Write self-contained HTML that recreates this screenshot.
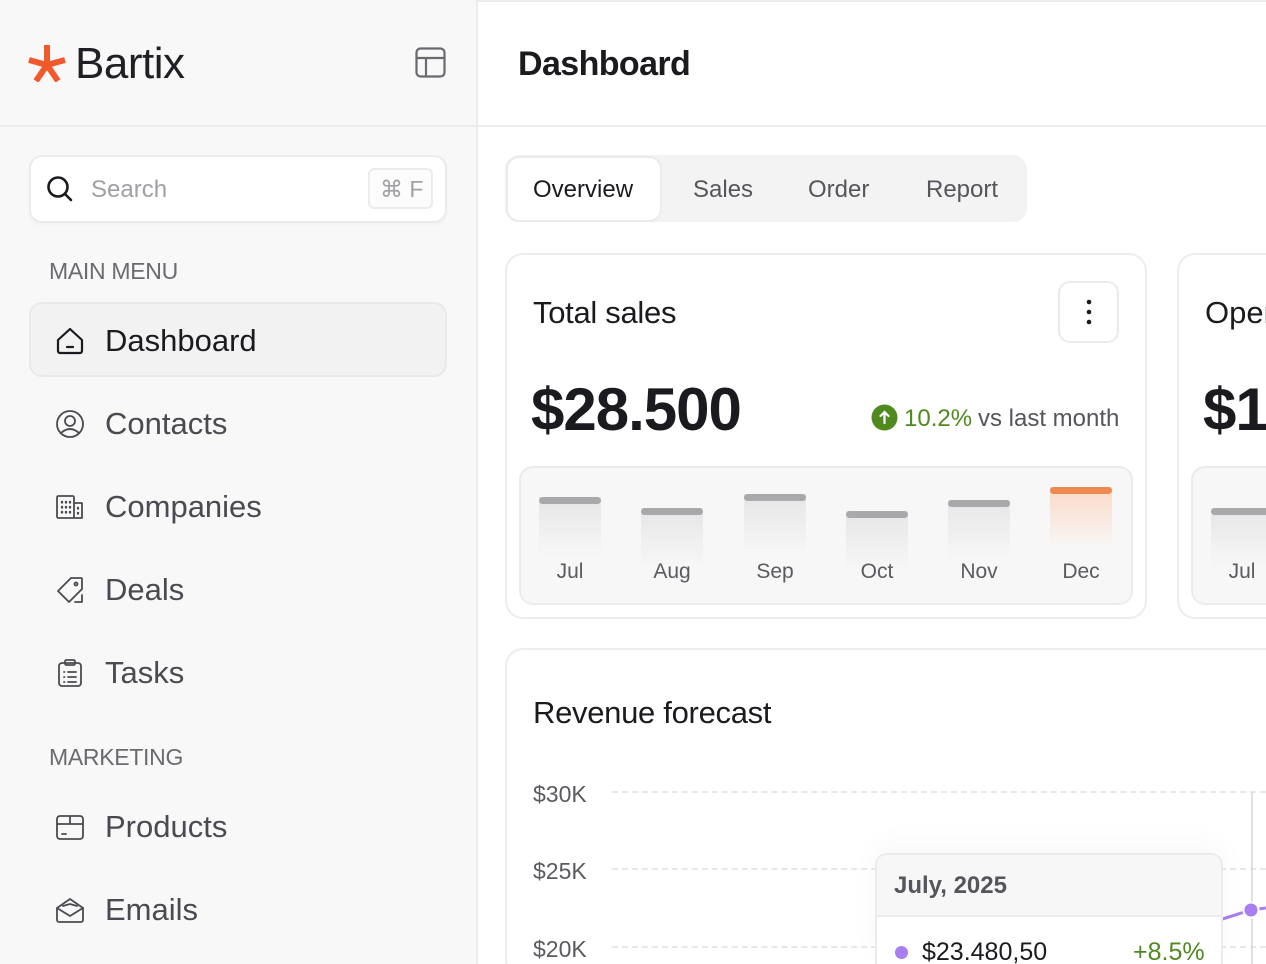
<!DOCTYPE html>
<html style="overflow:hidden;width:1266px;height:964px"><head><meta charset="utf-8"><style>
*{margin:0;padding:0;box-sizing:border-box}
body{width:1266px;height:964px;overflow:hidden;position:relative;background:#fff;font-family:"Liberation Sans",Arial,sans-serif;color:#1b1b1f}
.a{position:absolute;white-space:nowrap}
#side{position:absolute;left:0;top:0;width:478px;height:964px;background:#f8f8f8;border-right:2px solid #ececec}
.hl{position:absolute;left:0;width:1266px;top:125px;height:2px;background:#ececec}
.nav{position:absolute;left:55px;font-size:31px;color:#4a4a50;display:flex;align-items:center;gap:20px;height:40px}
.nav svg{width:30px;height:30px;stroke:#4a4a50;fill:none;stroke-width:1.8;stroke-linecap:round;stroke-linejoin:round}
.sec{position:absolute;left:49px;font-size:23px;color:#6a6a70;letter-spacing:-0.3px}
.card{position:absolute;background:#fff;border:2px solid #ededed;border-radius:18px}
.panel{position:absolute;background:#f7f7f7;border:2px solid #ebebeb;border-radius:14px}
.bar{position:absolute;width:62px;height:60px;background:linear-gradient(#e6e6e8,rgba(240,240,242,0))}
.bar:before{content:"";position:absolute;left:0;top:0;width:62px;height:7px;border-radius:4px;background:#a9a9ac}
.bar.o{background:linear-gradient(#fbd9c6,rgba(252,235,225,0))}
.bar.o:before{background:#ec8a4f}
.ml{position:absolute;font-size:21px;color:#5a5a60;width:62px;text-align:center;top:560px}
.yl{position:absolute;left:533px;font-size:23px;color:#5a5a60}
.dash{position:absolute;left:612px;width:654px;border-top:2px dashed #e8e8e8}
</style></head><body>
<div id="side"></div>
<div class="hl"></div>
<div class="a" style="left:478px;top:0;width:788px;height:2px;background:#ececec"></div>

<svg class="a" style="left:27px;top:44px" width="40" height="38" viewBox="0 0 40 38"><g stroke="#f0592b" stroke-width="6" stroke-linecap="butt"><line x1="20" y1="1" x2="20" y2="21"/><line x1="2" y1="16" x2="20" y2="21"/><line x1="38" y1="16" x2="20" y2="21"/><line x1="9" y1="37" x2="20" y2="21"/><line x1="31" y1="37" x2="20" y2="21"/></g></svg>
<div class="a" style="left:75px;top:39px;font-size:44px;color:#1f1f24;letter-spacing:-0.5px">Bartix</div>
<svg class="a" style="left:415px;top:47px" width="31" height="31" viewBox="0 0 31 31" fill="none" stroke="#6a6a70" stroke-width="2.2"><rect x="1.5" y="1.5" width="28" height="28" rx="4"/><line x1="1.5" y1="11" x2="29.5" y2="11"/><line x1="11" y1="11" x2="11" y2="29.5"/></svg>

<div class="a" style="left:29px;top:155px;width:418px;height:68px;background:#fff;border:2px solid #ebebeb;border-radius:13px;box-shadow:0 2px 3px rgba(0,0,0,.03)"></div>
<svg class="a" style="left:46px;top:175px" width="28" height="28" viewBox="0 0 28 28" fill="none" stroke="#1b1b1f" stroke-width="2.6" stroke-linecap="round"><circle cx="12" cy="12" r="9.5"/><line x1="19" y1="19" x2="25" y2="25"/></svg>
<div class="a" style="left:91px;top:176px;font-size:24px;color:#a0a0a4">Search</div>
<div class="a" style="left:368px;top:168px;width:65px;height:41px;border:2px solid #ececec;border-radius:6px;background:#fcfcfc;font-size:23px;color:#a0a0a4;padding:6px 0 0 10px">⌘ F</div>

<div class="sec" style="top:258px">MAIN MENU</div>
<div class="a" style="left:29px;top:302px;width:418px;height:75px;background:#f2f2f3;border:2px solid #e9e9ea;border-radius:13px"></div>
<div class="nav" style="top:321px;color:#1b1b1f"><svg viewBox="0 0 30 30" style="stroke:#1b1b1f;stroke-width:2.2"><path d="M3 14 L15 3 L27 14 V25 a2 2 0 0 1 -2 2 H5 a2 2 0 0 1 -2 -2 Z"/><line x1="12" y1="21" x2="18" y2="21"/></svg>Dashboard</div>
<div class="nav" style="top:404px"><svg viewBox="0 0 30 30"><circle cx="15" cy="15" r="13"/><circle cx="15" cy="12" r="5"/><path d="M6 24 Q15 16 24 24"/></svg>Contacts</div>
<div class="nav" style="top:487px"><svg viewBox="0 0 30 30"><rect x="2" y="4" width="17" height="22" rx="1.5"/><path d="M19 11 H27 V26 H19"/><g stroke-width="2.4"><line x1="7" y1="10" x2="7" y2="10.5"/><line x1="11" y1="10" x2="11" y2="10.5"/><line x1="15" y1="10" x2="15" y2="10.5"/><line x1="7" y1="15" x2="7" y2="15.5"/><line x1="11" y1="15" x2="11" y2="15.5"/><line x1="15" y1="15" x2="15" y2="15.5"/><line x1="7" y1="20" x2="7" y2="20.5"/><line x1="11" y1="20" x2="11" y2="20.5"/><line x1="15" y1="20" x2="15" y2="20.5"/><line x1="23" y1="16" x2="23" y2="16.5"/><line x1="23" y1="21" x2="23" y2="21.5"/></g></svg>Companies</div>
<div class="nav" style="top:570px"><svg viewBox="0 0 30 30"><path d="M16 3 H26 a1 1 0 0 1 1 1 V14 L14 27 L3 16 Z"/><circle cx="21" cy="9" r="1.5"/><path d="M27 20 V27 H20"/></svg>Deals</div>
<div class="nav" style="top:653px"><svg viewBox="0 0 30 30"><rect x="4" y="5" width="22" height="23" rx="3"/><rect x="10" y="2" width="10" height="5" rx="1.5"/><line x1="9" y1="14" x2="9.5" y2="14"/><line x1="13" y1="14" x2="21" y2="14"/><line x1="9" y1="19" x2="9.5" y2="19"/><line x1="13" y1="19" x2="21" y2="19"/><line x1="9" y1="24" x2="9.5" y2="24"/><line x1="13" y1="24" x2="21" y2="24"/></svg>Tasks</div>
<div class="sec" style="top:744px">MARKETING</div>
<div class="nav" style="top:807px"><svg viewBox="0 0 30 30"><rect x="2" y="4" width="26" height="23" rx="3"/><line x1="2" y1="12" x2="28" y2="12"/><line x1="15" y1="4" x2="15" y2="12"/><line x1="7" y1="22" x2="11" y2="22"/></svg>Products</div>
<div class="nav" style="top:890px"><svg viewBox="0 0 30 30"><path d="M2 13 L15 4 L28 13 V25 a2 2 0 0 1 -2 2 H4 a2 2 0 0 1 -2 -2 Z"/><path d="M2 13 L15 21 L28 13"/><path d="M8 11 L15 9 L22 11"/></svg>Emails</div>

<div class="a" style="left:518px;top:45px;font-size:34px;font-weight:bold;color:#1b1b1f;letter-spacing:-0.6px">Dashboard</div>
<div class="a" style="left:505px;top:155px;width:522px;height:67px;background:#f3f3f4;border-radius:14px"></div>
<div class="a" style="left:506px;top:156px;width:156px;height:66px;background:#fff;border:2px solid #ebebeb;border-radius:13px"></div>
<div class="a" style="left:533px;top:176px;font-size:24px;color:#1b1b1f">Overview</div>
<div class="a" style="left:693px;top:176px;font-size:24px;color:#55555b">Sales</div>
<div class="a" style="left:808px;top:176px;font-size:24px;color:#55555b">Order</div>
<div class="a" style="left:926px;top:176px;font-size:24px;color:#55555b">Report</div>

<div class="card" style="left:505px;top:253px;width:642px;height:366px"></div>
<div class="a" style="left:533px;top:295px;font-size:31px;letter-spacing:-0.3px">Total sales</div>
<div class="a" style="left:1058px;top:281px;width:61px;height:62px;border:2px solid #ebebeb;border-radius:12px;background:#fff"></div>
<svg class="a" style="left:1084px;top:298px" width="10" height="28"><circle cx="5" cy="4" r="2.3" fill="#1b1b1f"/><circle cx="5" cy="14" r="2.3" fill="#1b1b1f"/><circle cx="5" cy="24" r="2.3" fill="#1b1b1f"/></svg>
<div class="a" style="left:531px;top:375px;font-size:60px;font-weight:bold;letter-spacing:-1px">$28.500</div>
<svg class="a" style="left:871px;top:404px" width="27" height="27"><circle cx="13.5" cy="13.5" r="13" fill="#4f8a1f"/><path d="M13.5 19 V8.5 M9.5 12 L13.5 8 L17.5 12" stroke="#fff" stroke-width="2.2" fill="none" stroke-linecap="round"/></svg>
<div class="a" style="left:904px;top:405px;font-size:24px;color:#4f8a1f">10.2%</div>
<div class="a" style="left:978px;top:405px;font-size:24px;color:#55555b">vs last month</div>
<div class="panel" style="left:519px;top:466px;width:614px;height:139px"></div>
<div class="bar" style="left:539px;top:497px"></div>
<div class="bar" style="left:641px;top:508px"></div>
<div class="bar" style="left:744px;top:494px"></div>
<div class="bar" style="left:846px;top:511px"></div>
<div class="bar" style="left:948px;top:500px"></div>
<div class="bar o" style="left:1050px;top:487px"></div>
<div class="ml" style="left:539px">Jul</div>
<div class="ml" style="left:641px">Aug</div>
<div class="ml" style="left:744px">Sep</div>
<div class="ml" style="left:846px">Oct</div>
<div class="ml" style="left:948px">Nov</div>
<div class="ml" style="left:1050px">Dec</div>

<div class="card" style="left:1177px;top:253px;width:200px;height:366px"></div>
<div class="a" style="left:1205px;top:295px;font-size:31px">Open</div>
<div class="a" style="left:1203px;top:375px;font-size:60px;font-weight:bold;letter-spacing:-1px">$18</div>
<div class="panel" style="left:1191px;top:466px;width:200px;height:139px"></div>
<div class="bar" style="left:1211px;top:508px;width:70px"></div>
<div class="ml" style="left:1211px">Jul</div>

<div class="card" style="left:505px;top:648px;width:900px;height:330px"></div>
<div class="a" style="left:533px;top:695px;font-size:31px;letter-spacing:-0.3px">Revenue forecast</div>
<div class="yl" style="top:781px">$30K</div>
<div class="yl" style="top:858px">$25K</div>
<div class="yl" style="top:936px">$20K</div>
<div class="dash" style="top:791px"></div>
<div class="dash" style="top:868px"></div>
<div class="dash" style="top:946px"></div>
<div class="a" style="left:1251px;top:792px;width:2px;height:172px;background:#e0e0e0"></div>
<svg class="a" style="left:1210px;top:895px" width="56" height="30"><path d="M0 28 L41 15 L56 13" stroke="#a97ef0" stroke-width="3" fill="none"/><circle cx="41" cy="15" r="7.5" fill="#a97ef0" stroke="#fff" stroke-width="2"/></svg>
<div class="a" style="left:875px;top:853px;width:348px;height:111px;background:#fff;border:2px solid #ebebeb;border-bottom:none;border-radius:12px 12px 0 0;overflow:hidden;box-shadow:0 -10px 30px rgba(0,0,0,.03)">
<div style="height:62px;background:#f7f7f7;border-bottom:2px solid #ebebeb"></div></div>
<div class="a" style="left:894px;top:872px;font-size:24px;font-weight:bold;color:#55555b">July, 2025</div>
<svg class="a" style="left:894px;top:945px" width="15" height="15"><circle cx="7.5" cy="7.5" r="6.5" fill="#a97ef0"/></svg>
<div class="a" style="left:922px;top:938px;font-size:25px;color:#1b1b1f">$23.480,50</div>
<div class="a" style="left:1133px;top:938px;font-size:25px;color:#4f8a1f">+8.5%</div>
</body></html>
